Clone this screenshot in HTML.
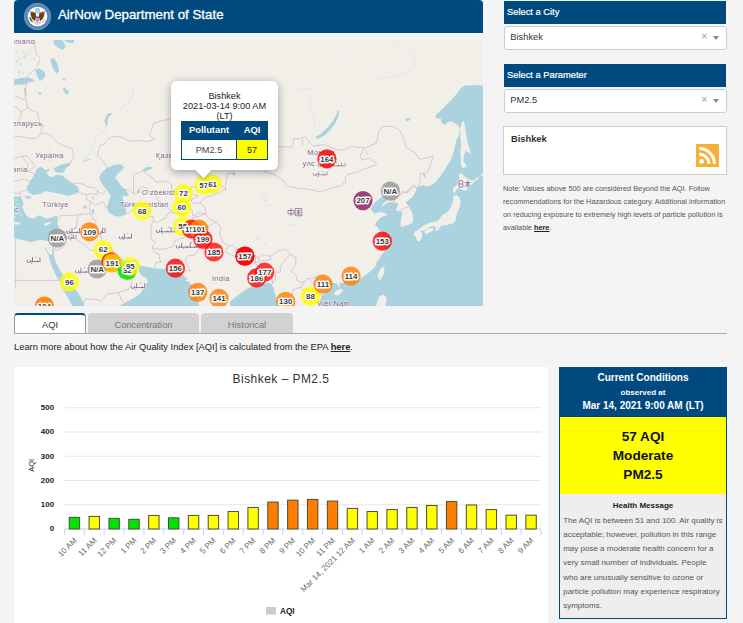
<!DOCTYPE html>
<html>
<head>
<meta charset="utf-8">
<title>AirNow Department of State</title>
<style>
html,body{margin:0;padding:0;}
body{width:743px;height:623px;overflow:hidden;background:#f4f4f4;font-family:"Liberation Sans",sans-serif;position:relative;color:#222;}
.abs{position:absolute;}
#hdr{left:14px;top:0;width:469px;height:33px;background:#004a80;border-radius:4px 4px 0 0;}
#hdr .t{position:absolute;left:44px;top:7px;font-size:13.3px;color:#fff;white-space:nowrap;-webkit-text-stroke:0.3px #fff;}
#map{left:14px;top:40px;width:469px;height:266px;background:#f2efe9;overflow:hidden;}
.sh{left:504px;width:222px;height:23px;background:#004a80;color:#fff;font-size:9.33px;-webkit-text-stroke:0.2px #fff;}
.sh span{position:absolute;left:3px;top:6px;white-space:nowrap;}
.sb{left:504px;width:221px;height:22px;background:#fff;border:1px solid #ccc;border-radius:3px;font-size:9.3px;color:#333;}
.sb span{position:absolute;left:5.3px;top:5.3px;}
.sb i{position:absolute;left:196.3px;top:3.2px;font-style:normal;font-size:10.5px;color:#999;}
.sb b{position:absolute;left:208px;top:9px;width:0;height:0;border-left:3px solid transparent;border-right:3px solid transparent;border-top:4px solid #888;}
.tab{top:313px;height:20px;font-size:9.33px;text-align:center;line-height:24.6px;color:#777;background:#d2d2d2;border-radius:4px 4px 0 0;}
.note{left:503px;top:182.2px;width:230px;font-size:7.33px;line-height:13px;color:#555;white-space:nowrap;}
#cc{left:559px;top:367px;width:166px;height:250px;border:1px solid #004a80;background:#eee;}
#cc .h{position:absolute;left:0;top:0;width:166px;height:49px;background:#004a80;color:#fff;text-align:center;font-weight:bold;}
#cc .h div{position:absolute;left:0;width:166px;white-space:nowrap;}
#cc .y{position:absolute;left:0;top:49px;width:166px;height:77px;background:#ffff00;color:#111;text-align:center;font-weight:bold;font-size:13.6px;line-height:19px;}
#cc .m{position:absolute;left:3.2px;top:146.2px;width:170px;font-size:8px;line-height:14.1px;color:#555;white-space:nowrap;}
</style>
</head>
<body>
<div id="hdr" class="abs"><div class="t">AirNow Department of State</div>
<svg class="abs" style="left:9px;top:2px" width="29" height="29" viewBox="-14.5 -14.5 29 29">
<circle r="13.3" fill="#4f82c9" stroke="#9aa35e" stroke-width="0.7"/>
<circle r="12" fill="none" stroke="#7fa6dd" stroke-width="1.6" stroke-dasharray="0.8 0.9" opacity="0.55"/>
<circle r="9.8" fill="#fff"/>
<circle cx="0" cy="-6" r="2.7" fill="#a9cfe6"/>
<path d="M-1.2 -3.4 L-7.2 -5.2 Q-7 2.5 -2.6 4.6 L-1.6 1.2 Z" fill="#6b4218"/>
<path d="M1.2 -3.4 L7.2 -5.2 Q7 2.5 2.6 4.6 L1.6 1.2 Z" fill="#6b4218"/>
<path d="M-5 -5.8 L-5.8 -3.6 M5 -5.8 L5.8 -3.6" stroke="#c9b650" stroke-width="1.1"/>
<path d="M-2 -3.2 L2 -3.2 L1.4 -0.5 L-1.4 -0.5Z" fill="#f1ede4"/>
<rect x="-2" y="0" width="4" height="1.7" fill="#2f5fae"/>
<path d="M-2 1.7 H2 V3.6 Q2 5.4 0 6 Q-2 5.4 -2 3.6Z" fill="#f08a8a"/>
<path d="M-8.4 1 Q-7.8 5 -4.2 6.2 Q-5.4 3.4 -7.2 0.6Z" fill="#3e7a3a"/>
<path d="M4 5.6 L8 2.2 M4.6 6.2 L8.4 3.6" stroke="#b5b5b5" stroke-width="0.7"/>
<path d="M-3.5 6.2 Q0 7.2 3.5 6.2" stroke="#8a8a8a" stroke-width="0.8" fill="none"/>
<ellipse cx="0" cy="7.6" rx="2.6" ry="1" fill="#d9d9d9"/>
</svg>

</div>
<div class="abs" style="left:14px;top:33px;width:469px;height:1px;background:#fbfbfb;"></div>
<div id="map" class="abs">
<svg class="abs" style="left:0;top:0" width="469" height="266" viewBox="14 40 469 266" font-family="Liberation Sans, sans-serif">
<g stroke-linejoin="round">
<path d="M53.6 40.0 L62.5 40.0 L65.7 46.5 L62.5 50.0 L57.6 47.3 L53.6 44.0Z" fill="#aad3df" />
<path d="M64.0 40.0 L74.6 40.0 L73.0 43.2 L67.3 42.4Z" fill="#aad3df" />
<path d="M50.3 58.6 L54.4 58.6 L57.6 64.2 L59.2 71.5 L56.3 73.9 L52.8 68.3 L51.2 62.6Z" fill="#aad3df" />
<path d="M35.0 69.9 L39.8 68.3 L44.7 72.3 L45.5 76.3 L42.3 79.6 L39.8 81.2 L37.4 76.3Z" fill="#aad3df" />
<path d="M14.0 79.6 L20.5 78.0 L28.5 77.2 L33.4 79.6 L35.0 81.2 L29.3 82.3 L23.7 84.4 L14.0 84.9Z" fill="#aad3df" />
<path d="M23.7 88.5 L25.6 88.1 L26.6 95.7 L25.0 95.7Z" fill="#aad3df" />
<path d="M62.5 88.5 L64.9 87.7 L68.9 91.7 L68.1 94.6 L65.4 94.1Z" fill="#aad3df" />
<path d="M62.5 78.8 L65.4 78.5 L65.6 80.6 L63.0 80.8Z" fill="#aad3df" />
<path d="M38.2 92.5 L41.2 92.3 L41.3 94.6 L38.5 94.6Z" fill="#aad3df" />
<path d="M104.5 120.8 L106.9 115.1 L109.3 113.0 L113.4 113.5 L109.3 115.9 L107.4 120.0 L107.7 124.0 L106.1 126.4Z" fill="#aad3df" />
<path d="M26.6 187.7 L30.2 181.2 L34.2 174.7 L36.6 169.1 L40.7 166.7 L45.5 169.9 L48.7 169.1 L50.3 169.9 L46.3 172.3 L48.7 176.3 L52.0 177.2 L56.8 174.7 L62.5 175.5 L68.1 180.4 L73.0 183.6 L77.8 186.8 L79.4 190.9 L75.4 194.1 L68.9 195.7 L60.8 194.1 L52.8 192.5 L46.3 190.9 L39.8 194.1 L33.4 194.9 L28.5 192.5Z" fill="#aad3df" />
<path d="M53.6 168.3 L60.0 165.0 L69.7 162.6 L68.9 165.8 L65.7 168.3 L64.1 172.3 L58.4 173.1 L55.2 171.5Z" fill="#aad3df" />
<path d="M99.1 177.2 L102.0 172.3 L107.7 167.5 L114.2 165.0 L121.4 164.2 L124.2 167.5 L121.4 170.7 L117.4 173.9 L115.0 178.0 L117.4 180.4 L120.6 185.2 L125.5 190.1 L128.7 194.1 L127.1 196.5 L122.2 195.7 L123.9 201.4 L125.5 207.9 L126.3 214.3 L120.6 216.7 L114.2 215.9 L109.3 212.7 L106.9 207.9 L108.5 201.4 L110.9 196.5 L106.9 190.1 L102.9 185.2 L100.4 181.2Z" fill="#aad3df" />
<path d="M14.0 196.5 L20.7 196.7 L23.6 202.4 L22.4 206.9 L24.1 211.3 L26.4 215.8 L29.7 218.1 L34.2 218.7 L36.5 216.4 L39.8 215.3 L44.3 218.1 L47.7 218.7 L52.2 217.0 L57.3 215.8 L57.8 219.2 L57.3 223.7 L58.4 227.1 L57.0 232.0 L54.5 236.5 L51.0 240.5 L47.7 241.1 L44.3 240.6 L39.8 240.0 L35.3 241.1 L30.9 242.2 L25.2 240.6 L19.6 239.4 L14.0 237.8Z" fill="#aad3df" />
<path d="M24.5 196.6 L27.0 196.0 L31.0 196.8 L30.5 198.5 L26.0 198.6Z" fill="#aad3df" />
<path d="M82.7 205.9 L85.9 205.1 L87.0 207.5 L84.3 209.1Z" fill="#aad3df" />
<path d="M91.9 209.5 L93.5 209.1 L94.3 213.5 L92.5 213.8Z" fill="#aad3df" />
<path d="M92.5 196.5 L93.8 196.9 L94.3 200.6 L93.0 200.1Z" fill="#aad3df" />
<path d="M43.9 247.2 L45.5 247.4 L49.2 254.0 L52.3 255.0 L52.4 248.8 L53.8 249.0 L53.9 255.5 L56.0 262.5 L60.0 270.6 L62.5 273.9 L69.0 282.0 L76.2 290.0 L80.2 296.5 L83.5 302.9 L84.3 306.0 L72.2 306.0 L70.5 302.9 L67.3 296.5 L64.1 291.6 L60.9 283.5 L56.8 277.1 L53.6 270.6 L50.3 262.5 L48.7 255.3 L47.0 252.0Z" fill="#aad3df" />
<path d="M106.5 245.3 L111.1 246.6 L113.7 251.4 L116.4 255.7 L120.6 257.9 L124.8 260.9 L128.9 261.7 L133.5 259.2 L135.8 259.6 L137.7 261.3 L139.1 265.8 L145.5 266.6 L153.6 268.2 L163.3 269.0 L174.6 270.6 L181.0 271.5 L182.0 274.5 L185.1 277.1 L187.5 279.5 L185.0 280.5 L189.2 281.9 L191.6 285.2 L194.0 286.0 L194.6 283.5 L196.0 284.0 L196.2 290.0 L197.0 297.0 L198.6 303.0 L199.5 306.0 L118.9 306.0 L126.2 302.1 L134.2 298.1 L140.7 293.2 L144.7 286.8 L148.0 281.1 L146.3 277.9 L141.5 275.5 L138.3 270.6 L135.0 262.4 L133.5 263.8 L130.8 266.8 L127.8 270.6 L124.4 271.8 L120.6 271.4 L117.5 271.8 L115.6 270.1 L116.8 266.8 L116.4 263.8 L114.5 263.8 L113.7 266.4 L111.8 265.1 L111.1 261.3 L109.2 258.7 L105.8 255.3 L103.9 251.4 L102.7 249.2 L103.1 247.1Z" fill="#aad3df" />
<path d="M230.0 306.0 L230.0 301.3 L236.5 296.5 L242.9 291.6 L249.4 287.6 L257.5 285.2 L262.0 284.5 L267.2 282.7 L271.2 283.5 L273.6 288.4 L276.0 296.5 L277.7 306.0Z" fill="#aad3df" />
<path d="M483.0 85.8 L475.6 85.1 L464.0 85.8 L460.4 88.7 L456.1 94.5 L449.6 101.7 L442.3 108.9 L435.1 116.1 L436.6 118.3 L440.9 118.7 L441.6 123.4 L445.2 124.8 L448.1 121.9 L451.7 121.2 L455.4 123.4 L459.0 126.3 L459.7 129.9 L459.0 134.9 L456.1 140.7 L454.6 148.0 L453.2 153.7 L450.3 161.0 L447.4 165.0 L444.8 170.1 L440.9 175.3 L435.8 181.7 L430.7 185.5 L426.8 186.2 L423.0 184.9 L420.4 186.2 L418.2 186.6 L416.5 189.0 L414.9 193.1 L412.5 197.1 L408.5 200.3 L406.0 202.4 L407.3 204.8 L409.3 207.6 L411.7 211.7 L412.9 215.7 L413.3 219.7 L412.1 223.0 L408.5 225.0 L403.6 226.6 L401.2 227.0 L400.4 224.6 L400.8 221.3 L401.2 217.3 L402.4 214.9 L402.0 212.1 L400.4 211.3 L398.0 211.3 L395.9 210.0 L396.3 208.4 L398.0 205.2 L397.6 203.2 L394.7 202.4 L390.7 202.0 L386.7 203.2 L384.2 205.2 L381.4 206.4 L381.8 205.2 L384.2 202.4 L387.0 200.5 L385.0 197.0 L381.4 197.1 L379.4 199.1 L376.2 201.2 L372.9 205.2 L370.5 209.2 L373.3 211.7 L374.1 213.7 L377.4 212.9 L380.2 211.7 L384.2 212.9 L386.7 214.1 L387.1 215.3 L384.2 216.1 L381.0 217.3 L378.2 219.7 L375.8 223.0 L375.0 225.0 L377.9 227.4 L379.9 230.7 L381.1 232.3 L383.5 236.0 L386.0 240.5 L383.5 243.0 L386.0 246.5 L384.7 250.8 L383.1 253.3 L381.1 255.7 L379.1 258.9 L376.7 262.2 L375.8 265.4 L374.2 267.8 L371.8 270.2 L368.6 272.7 L365.8 275.0 L363.3 276.4 L360.7 277.7 L351.7 280.9 L342.6 282.8 L338.8 283.5 L340.1 285.4 L339.4 287.4 L338.1 286.1 L337.5 284.1 L333.6 282.8 L330.0 282.5 L327.0 286.0 L325.8 293.2 L322.0 295.8 L320.7 298.4 L319.4 302.2 L320.7 306.0 L483.0 306.0Z" fill="#aad3df" />
<path d="M315.4 136.9 L321.9 132.9 L328.3 126.4 L333.2 120.8 L336.4 114.3 L337.7 110.8 L339.3 111.1 L338.0 117.5 L334.8 124.0 L329.9 130.5 L323.5 136.1 L317.8 138.9Z" fill="#aad3df" />
<path d="M296.8 213.8 L299.5 213.2 L303.3 215.5 L302.0 217.0 L298.0 216.0Z" fill="#aad3df" />
<path d="M142.0 170.5 L146.0 167.5 L150.0 166.7 L153.4 167.5 L150.0 169.5 L145.0 171.5Z" fill="#aad3df" />
<path d="M137.0 190.5 L139.5 190.0 L139.8 193.0 L137.5 193.0Z" fill="#aad3df" />
<path d="M232.5 173.0 L235.5 173.5 L235.0 175.5 L232.5 175.0Z" fill="#aad3df" />
<path d="M405.5 118.4 L411.0 118.0 L409.0 120.8 L406.0 121.0Z" fill="#aad3df" />
<path d="M423.0 174.2 L425.5 174.0 L425.3 177.2 L423.6 176.8Z" fill="#aad3df" />
<path d="M461.9 121.9 L463.7 120.5 L464.8 124.8 L466.2 133.5 L467.6 142.2 L469.8 149.4 L471.3 155.2 L468.4 152.3 L465.5 150.8 L464.0 155.2 L463.3 161.0 L466.2 165.3 L466.9 168.9 L464.8 166.7 L462.6 168.2 L461.1 165.3 L460.9 158.1 L460.4 152.3 L461.1 145.0 L460.4 137.8 L460.1 129.2Z" fill="#f2efe9" />
<path d="M452.5 188.7 L454.4 186.8 L456.3 185.5 L458.9 183.0 L459.6 179.1 L458.9 175.3 L460.2 172.7 L462.8 174.6 L466.0 177.8 L469.2 179.8 L473.0 180.4 L476.9 177.8 L480.0 176.0 L477.0 180.0 L475.0 181.0 L473.0 183.0 L470.5 185.5 L467.9 188.7 L465.3 190.7 L461.5 189.4 L458.3 188.1 L456.3 190.0 L455.1 192.6 L453.8 193.2 L453.1 190.7Z" fill="#f2efe9" />
<path d="M453.8 195.8 L457.0 195.2 L459.6 197.7 L460.8 202.2 L459.6 207.4 L457.6 211.2 L456.3 216.3 L455.7 220.8 L453.1 223.4 L449.9 224.1 L446.7 225.3 L443.5 225.3 L440.3 226.6 L439.0 229.2 L437.1 231.1 L435.2 230.5 L435.8 227.9 L434.5 226.0 L430.7 226.6 L426.8 229.2 L424.3 230.5 L420.4 231.1 L418.5 231.8 L417.2 230.5 L420.4 227.9 L424.3 225.3 L428.1 223.4 L432.6 222.1 L437.1 221.5 L439.0 219.6 L442.2 215.1 L446.1 213.1 L449.3 209.9 L451.9 204.8 L453.1 199.7Z" fill="#f2efe9" />
<path d="M424.3 231.8 L427.5 229.4 L431.3 228.1 L433.9 228.5 L432.6 231.1 L429.4 232.4 L425.5 234.3Z" fill="#f2efe9" />
<path d="M414.0 233.0 L415.9 231.1 L419.1 231.1 L421.7 233.0 L422.3 236.2 L421.0 239.5 L419.1 241.4 L417.2 240.7 L415.9 237.5 L414.0 235.0Z" fill="#f2efe9" />
<path d="M377.5 275.1 L379.5 270.6 L382.0 267.4 L383.9 267.0 L384.5 269.0 L384.0 273.2 L382.0 277.7 L380.1 280.3 L378.6 278.3Z" fill="#f2efe9" />
<path d="M333.9 293.2 L336.2 290.6 L340.1 289.0 L342.9 289.6 L342.0 292.5 L338.8 295.1 L335.5 295.5Z" fill="#f2efe9" />
<path d="M376.2 306.0 L377.5 300.9 L379.5 296.4 L382.7 294.5 L385.9 296.4 L386.6 300.9 L385.3 306.0Z" fill="#f2efe9" />
<path d="M43.8 223.7 L47.7 222.6 L51.1 221.5 L50.0 223.7 L46.6 225.4 L44.3 225.4Z" fill="#f2efe9" />
<path d="M14.0 222.4 L17.0 222.0 L20.2 223.0 L19.5 224.4 L14.0 224.6Z" fill="#f2efe9" />
<path d="M15.2 199.5 L16.7 199.3 L16.9 200.5 L15.5 200.7Z" fill="#f2efe9" />
<path d="M17.0 204.0 L18.5 203.8 L18.7 205.0 L17.3 205.2Z" fill="#f2efe9" />
<path d="M14.4 207.0 L15.9 206.8 L16.1 208.0 L14.7 208.2Z" fill="#f2efe9" />
<path d="M17.4 210.0 L18.9 209.8 L19.1 211.0 L17.7 211.2Z" fill="#f2efe9" />
<path d="M15.5 213.0 L17.0 212.8 L17.2 214.0 L15.8 214.2Z" fill="#f2efe9" />
<path d="M20.2 214.3 L21.7 214.1 L21.9 215.3 L20.5 215.5Z" fill="#f2efe9" />
<path d="M14.2 216.5 L15.7 216.3 L15.9 217.5 L14.5 217.7Z" fill="#f2efe9" />
<path d="M480.5 175.0 L483.0 173.5 L483.0 175.0 L481.0 176.5Z" fill="#f2efe9" />
<ellipse cx="19.5" cy="50.7" rx="0.6" ry="0.9" fill="#aad3df" opacity="0.37" transform="rotate(-10 19.5 50.7)"/>
<ellipse cx="29.5" cy="53.8" rx="0.7" ry="1.0" fill="#aad3df" opacity="0.41" transform="rotate(-25 29.5 53.8)"/>
<ellipse cx="19.1" cy="72.1" rx="0.9" ry="1.7" fill="#aad3df" opacity="0.63" transform="rotate(-20 19.1 72.1)"/>
<ellipse cx="20.9" cy="64.3" rx="0.8" ry="1.7" fill="#aad3df" opacity="0.66" transform="rotate(-26 20.9 64.3)"/>
<ellipse cx="26.5" cy="65.5" rx="0.7" ry="0.9" fill="#aad3df" opacity="0.52" transform="rotate(-26 26.5 65.5)"/>
<ellipse cx="25.4" cy="55.8" rx="0.9" ry="1.4" fill="#aad3df" opacity="0.66" transform="rotate(12 25.4 55.8)"/>
<ellipse cx="24.7" cy="58.8" rx="0.8" ry="1.2" fill="#aad3df" opacity="0.41" transform="rotate(-15 24.7 58.8)"/>
<ellipse cx="30.4" cy="49.1" rx="0.4" ry="1.5" fill="#aad3df" opacity="0.45" transform="rotate(-3 30.4 49.1)"/>
<ellipse cx="24.0" cy="56.9" rx="1.0" ry="0.9" fill="#aad3df" opacity="0.49" transform="rotate(-20 24.0 56.9)"/>
<ellipse cx="27.0" cy="55.2" rx="0.6" ry="1.6" fill="#aad3df" opacity="0.46" transform="rotate(-2 27.0 55.2)"/>
<ellipse cx="32.2" cy="50.6" rx="0.4" ry="1.0" fill="#aad3df" opacity="0.62" transform="rotate(1 32.2 50.6)"/>
<ellipse cx="19.5" cy="56.6" rx="0.5" ry="1.3" fill="#aad3df" opacity="0.36" transform="rotate(5 19.5 56.6)"/>
<ellipse cx="29.0" cy="73.0" rx="0.4" ry="1.0" fill="#aad3df" opacity="0.69" transform="rotate(9 29.0 73.0)"/>
<ellipse cx="22.8" cy="72.5" rx="0.8" ry="1.7" fill="#aad3df" opacity="0.45" transform="rotate(-20 22.8 72.5)"/>
<ellipse cx="23.4" cy="51.5" rx="0.6" ry="1.9" fill="#aad3df" opacity="0.47" transform="rotate(-30 23.4 51.5)"/>
<ellipse cx="15.9" cy="52.4" rx="0.9" ry="1.1" fill="#aad3df" opacity="0.45" transform="rotate(-25 15.9 52.4)"/>
<ellipse cx="33.7" cy="59.0" rx="0.5" ry="0.8" fill="#aad3df" opacity="0.37" transform="rotate(-22 33.7 59.0)"/>
<ellipse cx="27.9" cy="51.9" rx="0.4" ry="1.3" fill="#aad3df" opacity="0.44" transform="rotate(20 27.9 51.9)"/>
<ellipse cx="17.3" cy="61.8" rx="0.9" ry="1.2" fill="#aad3df" opacity="0.70" transform="rotate(-6 17.3 61.8)"/>
<ellipse cx="19.6" cy="58.7" rx="0.4" ry="1.2" fill="#aad3df" opacity="0.44" transform="rotate(14 19.6 58.7)"/>
<ellipse cx="30.8" cy="61.0" rx="0.4" ry="1.0" fill="#aad3df" opacity="0.43" transform="rotate(-20 30.8 61.0)"/>
<ellipse cx="19.4" cy="70.6" rx="0.5" ry="0.8" fill="#aad3df" opacity="0.67" transform="rotate(-2 19.4 70.6)"/>
<ellipse cx="33.8" cy="58.5" rx="0.9" ry="1.5" fill="#aad3df" opacity="0.63" transform="rotate(7 33.8 58.5)"/>
<path d="M119.8 109.8 L125.5 104.6 L131.9 97.4 L133.5 90.1" fill="none" stroke="#aad3df" stroke-width="0.9" opacity="0.45" stroke-linecap="round" stroke-linejoin="round"/>
<path d="M106.5 126.0 L104.8 130.8 L96.2 137.3 L93.0 148.1 L89.0 156.0 L84.4 159.9" fill="none" stroke="#aad3df" stroke-width="0.8" opacity="0.4" stroke-linecap="round" stroke-linejoin="round"/>
<path d="M84.0 161.0 L90.0 159.5" fill="none" stroke="#aad3df" stroke-width="1.6" opacity="0.6" stroke-linecap="round" stroke-linejoin="round"/>
<path d="M395.0 40.0 L408.0 52.0 L413.5 53.7 L415.2 62.6 L411.1 69.9 L393.4 76.3 L374.0 79.6" fill="none" stroke="#aad3df" stroke-width="0.7" opacity="0.35" stroke-linecap="round" stroke-linejoin="round"/>
<path d="M47.0 148.0 L50.0 152.0 L52.5 157.0 L50.0 161.0" fill="none" stroke="#aad3df" stroke-width="0.9" opacity="0.45" stroke-linecap="round" stroke-linejoin="round"/>
<path d="M297.6 90.0 L305.0 88.0 L311.0 89.0" fill="none" stroke="#aad3df" stroke-width="0.7" opacity="0.35" stroke-linecap="round" stroke-linejoin="round"/>
<path d="M307.0 101.0 L312.0 100.0 L309.0 109.0 L314.0 118.0 L315.0 126.0" fill="none" stroke="#aad3df" stroke-width="0.8" opacity="0.35" stroke-linecap="round" stroke-linejoin="round"/>
<path d="M302.0 140.0 L303.0 145.0" fill="none" stroke="#aad3df" stroke-width="1.3" opacity="0.6" stroke-linecap="round" stroke-linejoin="round"/>
<path d="M366.0 151.5 L367.6 154.3" fill="none" stroke="#aad3df" stroke-width="1.5" opacity="0.6" stroke-linecap="round" stroke-linejoin="round"/>
<path d="M261.0 196.5 L266.5 198.0" fill="none" stroke="#aad3df" stroke-width="1.2" opacity="0.45" stroke-linecap="round" stroke-linejoin="round"/>
<path d="M262.5 200.0 L267.0 201.0" fill="none" stroke="#aad3df" stroke-width="1.0" opacity="0.4" stroke-linecap="round" stroke-linejoin="round"/>
<path d="M341.0 52.0 L345.0 56.0 L343.0 60.0" fill="none" stroke="#aad3df" stroke-width="0.8" opacity="0.35" stroke-linecap="round" stroke-linejoin="round"/>
<ellipse cx="259" cy="212.5" rx="1.2" ry="0.6" fill="#aad3df" opacity="0.7"/>
<ellipse cx="260" cy="222" rx="0.7" ry="0.5" fill="#aad3df" opacity="0.7"/>
<ellipse cx="264" cy="231" rx="1.0" ry="0.6" fill="#aad3df" opacity="0.7"/>
<ellipse cx="259" cy="239" rx="1.2" ry="0.7" fill="#aad3df" opacity="0.7"/>
<ellipse cx="264.7" cy="244" rx="1.1" ry="0.6" fill="#aad3df" opacity="0.7"/>
<ellipse cx="290.6" cy="224.6" rx="1.2" ry="0.7" fill="#aad3df" opacity="0.7"/>
<ellipse cx="256" cy="238" rx="0.8" ry="0.5" fill="#aad3df" opacity="0.7"/>
<ellipse cx="268" cy="205" rx="0.8" ry="0.5" fill="#aad3df" opacity="0.7"/>
</g>
<path d="M35.0 40.0 L34.7 44.8 L35.8 52.9 L40.3 58.6 L36.6 67.5 L27.7 76.3 L26.1 86.8 L25.3 95.7 L26.1 99.8 L27.7 107.9 L31.8 110.3 L37.4 112.7 L39.0 119.2 L39.8 124.0 L43.9 125.6 L40.7 130.5 L41.5 133.7 L46.6 133.0 L53.1 137.3 L56.3 141.6 L63.9 145.9 L72.5 149.1 L73.6 156.7 L70.3 163.1 L68.2 166.4" fill="none" stroke="#c9b3cf" stroke-width="0.75" stroke-linejoin="round" stroke-linecap="round" opacity="0.9"/>
<path d="M14.0 95.7 L18.8 97.4 L22.1 99.0 L25.3 99.8" fill="none" stroke="#c9b3cf" stroke-width="0.75" stroke-linejoin="round" stroke-linecap="round" opacity="0.9"/>
<path d="M14.0 106.2 L18.0 108.7 L21.3 111.9 L22.1 111.1 L27.7 107.9" fill="none" stroke="#c9b3cf" stroke-width="0.75" stroke-linejoin="round" stroke-linecap="round" opacity="0.9"/>
<path d="M21.3 111.9 L20.5 117.5 L17.2 122.4 L14.0 124.0" fill="none" stroke="#c9b3cf" stroke-width="0.75" stroke-linejoin="round" stroke-linecap="round" opacity="0.9"/>
<path d="M14.0 136.1 L22.1 136.9 L30.2 138.5 L36.6 137.7 L41.5 133.7" fill="none" stroke="#c9b3cf" stroke-width="0.75" stroke-linejoin="round" stroke-linecap="round" opacity="0.9"/>
<path d="M107.0 170.0 L105.9 165.3 L102.7 161.0 L97.3 155.6 L99.4 145.9 L104.8 143.8 L107.0 139.4 L113.4 136.2 L122.1 137.3 L130.7 141.6 L139.3 140.5 L147.9 141.6 L154.4 139.4 L149.0 135.1 L152.2 128.7 L153.3 123.3 L160.9 121.1 L170.1 119.0" fill="none" stroke="#c9b3cf" stroke-width="0.75" stroke-linejoin="round" stroke-linecap="round" opacity="0.9"/>
<path d="M264.5 171.5 L275.0 174.7 L283.1 180.4 L286.3 186.0 L299.2 188.5 L308.1 189.1 L320.2 191.8 L331.0 188.5 L340.4 185.8 L345.8 181.7 L345.1 177.0 L348.5 174.3 L356.5 172.3 L364.6 168.9 L375.4 164.9 L376.7 163.6 L370.0 158.2 L361.9 159.5 L359.9 156.8 L363.3 148.7 L364.6 148.1 L359.2 147.4 L351.1 146.1 L344.4 149.4 L336.3 150.1 L328.9 146.1 L324.2 144.7 L313.5 146.1 L309.4 142.7 L308.1 140.0 L305.0 137.0 L300.0 138.5 L293.0 139.0 L293.6 143.2 L291.2 147.3 L279.0 146.5 L272.0 150.0 L264.0 152.0 L258.0 150.0" fill="none" stroke="#c9b3cf" stroke-width="0.75" stroke-linejoin="round" stroke-linecap="round" opacity="0.9"/>
<path d="M264.5 171.5 L262.0 168.0 L263.0 160.0 L258.0 150.0" fill="none" stroke="#c9b3cf" stroke-width="0.75" stroke-linejoin="round" stroke-linecap="round" opacity="0.9"/>
<path d="M364.6 148.1 L370.0 146.0 L376.0 143.0 L377.2 140.0 L378.8 130.5 L383.7 126.4 L393.4 126.4 L399.8 130.5 L403.9 140.0 L406.3 147.3 L416.0 153.7 L419.2 159.4 L433.8 156.2 L430.5 164.2 L427.3 172.3 L420.0 173.9 L420.0 183.6 L416.8 187.7" fill="none" stroke="#c9b3cf" stroke-width="0.75" stroke-linejoin="round" stroke-linecap="round" opacity="0.9"/>
<path d="M416.8 187.7 L413.6 186.8 L408.7 191.7 L402.3 192.5 L399.8 195.7 L396.0 199.0 L393.5 202.0" fill="none" stroke="#c9b3cf" stroke-width="0.75" stroke-linejoin="round" stroke-linecap="round" opacity="0.9"/>
<path d="M400.6 210.9 L403.3 208.4 L408.2 207.0" fill="none" stroke="#c9b3cf" stroke-width="0.75" stroke-linejoin="round" stroke-linecap="round" opacity="0.9"/>
<path d="M15.6 239.0 L15.6 288.0" fill="none" stroke="#c9b3cf" stroke-width="0.75" stroke-linejoin="round" stroke-linecap="round" opacity="0.9"/>
<path d="M14.0 280.4 L60.5 280.4" fill="none" stroke="#c9b3cf" stroke-width="0.75" stroke-linejoin="round" stroke-linecap="round" opacity="0.9"/>
<path d="M53.3 248.8 L50.9 240.9" fill="none" stroke="#c9b3cf" stroke-width="0.75" stroke-linejoin="round" stroke-linecap="round" opacity="0.9"/>
<path d="M90.9 201.6 L89.4 208.0 L90.9 213.7 L93.2 219.4 L96.3 220.8 L93.6 228.7 L96.3 232.3 L100.8 236.0 L102.0 242.2 L103.1 244.4 L105.4 247.1" fill="none" stroke="#c9b3cf" stroke-width="0.75" stroke-linejoin="round" stroke-linecap="round" opacity="0.9"/>
<path d="M90.9 213.7 L81.8 214.2 L72.7 215.6 L65.1 215.6 L60.2 215.6 L59.8 218.5 L57.1 219.9" fill="none" stroke="#c9b3cf" stroke-width="0.75" stroke-linejoin="round" stroke-linecap="round" opacity="0.9"/>
<path d="M81.8 214.2 L77.3 217.1 L76.5 226.9 L68.1 231.4 L69.7 236.9 L74.2 238.2 L80.7 241.8 L90.6 250.1 L97.4 250.5 L100.8 251.0 L102.0 253.1 L104.6 253.1" fill="none" stroke="#c9b3cf" stroke-width="0.75" stroke-linejoin="round" stroke-linecap="round" opacity="0.9"/>
<path d="M68.1 231.4 L60.5 236.4 L57.1 234.6 L56.0 231.9 L59.8 227.8 L57.5 225.9" fill="none" stroke="#c9b3cf" stroke-width="0.75" stroke-linejoin="round" stroke-linecap="round" opacity="0.9"/>
<path d="M69.7 236.9 L61.3 240.0 L65.1 244.4 L63.2 246.6 L57.9 250.1 L53.7 249.2" fill="none" stroke="#c9b3cf" stroke-width="0.75" stroke-linejoin="round" stroke-linecap="round" opacity="0.9"/>
<path d="M83.3 303.0 L84.9 299.0 L88.7 299.0 L97.0 299.8 L101.2 300.6 L106.9 294.3 L118.3 292.6 L129.7 288.6 L132.4 280.5 L130.5 277.6 L120.6 276.8 L116.8 271.8" fill="none" stroke="#c9b3cf" stroke-width="0.75" stroke-linejoin="round" stroke-linecap="round" opacity="0.9"/>
<path d="M130.5 277.6 L133.5 272.2 L135.0 268.5" fill="none" stroke="#c9b3cf" stroke-width="0.75" stroke-linejoin="round" stroke-linecap="round" opacity="0.9"/>
<path d="M118.3 292.6 L122.5 302.0" fill="none" stroke="#c9b3cf" stroke-width="0.75" stroke-linejoin="round" stroke-linecap="round" opacity="0.9"/>
<path d="M125.5 213.3 L128.9 212.8 L134.3 209.4 L138.1 208.9 L142.6 211.8 L146.0 212.3 L149.8 216.6 L153.3 216.6 L153.3 221.3 L150.6 226.4 L152.1 231.0 L150.6 233.7 L151.7 240.0 L155.5 242.2 L152.1 247.5 L155.2 252.7 L159.3 254.4 L159.3 258.7 L161.2 261.3 L155.5 263.0 L154.8 267.2" fill="none" stroke="#c9b3cf" stroke-width="0.75" stroke-linejoin="round" stroke-linecap="round" opacity="0.9"/>
<path d="M153.3 221.3 L157.4 222.7 L160.5 220.3 L165.8 218.0 L166.9 214.2 L170.4 212.3 L173.4 212.8 L178.3 213.7 L184.0 214.2 L187.5 211.8 L189.7 208.0 L192.0 210.4 L192.8 216.1 L199.2 212.8 L205.3 213.7" fill="none" stroke="#c9b3cf" stroke-width="0.75" stroke-linejoin="round" stroke-linecap="round" opacity="0.9"/>
<path d="M205.3 213.7 L201.9 215.6 L192.8 217.5 L191.3 225.5 L186.7 228.7 L186.3 232.8 L184.0 238.2 L179.9 238.6 L174.9 240.9 L173.0 246.6 L163.9 249.2 L158.2 249.2 L152.1 247.5" fill="none" stroke="#c9b3cf" stroke-width="0.75" stroke-linejoin="round" stroke-linecap="round" opacity="0.9"/>
<path d="M216.3 221.8 L208.7 226.4 L201.9 225.5 L204.2 234.1 L207.2 236.4 L203.4 241.8 L204.2 242.6 L199.6 247.1 L197.7 251.0 L193.9 255.7 L189.0 255.3 L185.2 258.7 L187.5 265.1 L190.5 270.6 L182.1 271.0 L179.9 273.5" fill="none" stroke="#c9b3cf" stroke-width="0.75" stroke-linejoin="round" stroke-linecap="round" opacity="0.9"/>
<path d="M205.3 213.7 L209.5 219.4 L216.3 221.8 L220.9 227.3 L219.8 235.1 L222.8 242.2 L228.5 245.7 L232.7 245.3 L239.9 251.4 L247.5 255.3 L255.5 255.7 L258.5 258.3 L261.9 254.4 L268.8 256.2 L270.7 256.2 L277.9 251.0 L285.5 249.2 L290.4 254.4 L295.8 257.5 L295.8 264.7 L291.6 270.1 L292.0 272.2 L296.5 275.5 L296.9 280.5 L301.1 282.5 L304.9 281.3 L307.5 278.4 L309.1 278.8 L314.0 277.6 L320.8 275.1 L326.2 277.2 L325.8 280.5 L331.1 282.5" fill="none" stroke="#c9b3cf" stroke-width="0.75" stroke-linejoin="round" stroke-linecap="round" opacity="0.9"/>
<path d="M228.5 245.7 L225.1 251.8 L228.5 253.6 L235.0 256.6 L240.3 257.5 L246.7 261.3 L255.5 262.1 L255.5 255.7" fill="none" stroke="#c9b3cf" stroke-width="0.75" stroke-linejoin="round" stroke-linecap="round" opacity="0.9"/>
<path d="M258.5 258.3 L258.9 260.9 L263.8 260.4 L270.7 260.0 L270.7 256.2" fill="none" stroke="#c9b3cf" stroke-width="0.75" stroke-linejoin="round" stroke-linecap="round" opacity="0.9"/>
<path d="M255.5 262.1 L255.9 264.7 L258.5 267.2 L255.5 270.1 L258.1 275.5 L258.5 278.4 L259.3 281.3" fill="none" stroke="#c9b3cf" stroke-width="0.75" stroke-linejoin="round" stroke-linecap="round" opacity="0.9"/>
<path d="M255.5 262.1 L258.9 262.6 L261.9 263.8 L261.9 266.8 L271.8 268.0 L271.1 271.4 L267.3 273.9 L268.8 276.4 L271.4 273.9 L272.6 283.3 L271.4 285.8" fill="none" stroke="#c9b3cf" stroke-width="0.75" stroke-linejoin="round" stroke-linecap="round" opacity="0.9"/>
<path d="M290.4 254.4 L286.3 258.3 L282.1 263.8 L280.2 267.2 L280.6 272.2 L275.2 272.2 L275.6 278.4 L272.6 283.3" fill="none" stroke="#c9b3cf" stroke-width="0.75" stroke-linejoin="round" stroke-linecap="round" opacity="0.9"/>
<path d="M304.9 281.3 L301.1 287.0 L293.1 289.8 L292.0 294.7 L290.8 300.6 L295.0 303.8 L293.9 306.2" fill="none" stroke="#c9b3cf" stroke-width="0.75" stroke-linejoin="round" stroke-linecap="round" opacity="0.9"/>
<path d="M309.1 278.8 L311.7 282.1 L315.5 285.0 L319.3 288.6 L315.9 290.6 L320.5 293.9 L325.4 300.6 L329.2 304.6 L329.6 306.2" fill="none" stroke="#c9b3cf" stroke-width="0.75" stroke-linejoin="round" stroke-linecap="round" opacity="0.9"/>
<path d="M301.1 287.0 L302.6 290.6 L305.3 290.6 L305.6 297.9 L308.7 295.9 L313.6 295.1 L318.6 298.6 L318.9 303.0 L322.0 306.2" fill="none" stroke="#c9b3cf" stroke-width="0.75" stroke-linejoin="round" stroke-linecap="round" opacity="0.9"/>
<path d="M252.4 151.4 L245.6 162.8 L236.1 162.3 L233.4 171.6 L234.6 173.2 L227.7 173.8 L225.5 185.9 L225.5 189.0 L218.6 193.1 L212.9 195.1 L205.3 197.6 L201.1 201.1 L200.4 203.1 L205.3 207.5 L205.3 213.7" fill="none" stroke="#c9b3cf" stroke-width="0.75" stroke-linejoin="round" stroke-linecap="round" opacity="0.9"/>
<path d="M225.5 189.0 L221.7 185.9 L209.5 184.9 L202.7 183.8 L200.0 187.5 L190.5 187.0 L190.1 188.5 L182.9 193.6 L179.1 195.1 L173.4 194.6 L171.5 188.0 L171.9 184.9 L167.3 181.2 L156.3 182.3 L152.9 178.1 L143.4 171.1 L133.5 174.3 L133.5 193.6 L129.3 190.0 L122.1 189.5 L120.2 191.6" fill="none" stroke="#c9b3cf" stroke-width="0.75" stroke-linejoin="round" stroke-linecap="round" opacity="0.9"/>
<path d="M133.5 193.6 L137.3 193.6 L137.7 190.0 L143.0 186.4 L148.7 189.0 L149.1 193.1 L155.9 194.6 L157.8 200.1 L164.7 205.5 L173.4 212.8" fill="none" stroke="#c9b3cf" stroke-width="0.75" stroke-linejoin="round" stroke-linecap="round" opacity="0.9"/>
<path d="M178.3 213.7 L179.1 205.5 L179.5 202.6 L188.6 200.1 L190.1 199.1 L193.5 203.1 L200.4 203.1" fill="none" stroke="#c9b3cf" stroke-width="0.75" stroke-linejoin="round" stroke-linecap="round" opacity="0.9"/>
<path d="M190.1 188.5 L191.6 189.0 L189.0 192.6 L195.1 195.1 L198.5 196.1 L193.2 199.1 L190.1 199.1" fill="none" stroke="#c9b3cf" stroke-width="0.75" stroke-linejoin="round" stroke-linecap="round" opacity="0.9"/>
<path d="M72.7 182.8 L82.2 183.8 L87.9 187.0 L94.4 187.5 L97.4 191.1 L102.3 194.1 L105.4 191.1" fill="none" stroke="#c9b3cf" stroke-width="0.75" stroke-linejoin="round" stroke-linecap="round" opacity="0.9"/>
<path d="M78.4 192.6 L86.0 194.6 L91.7 193.6 L97.4 194.6 L97.4 191.1" fill="none" stroke="#c9b3cf" stroke-width="0.75" stroke-linejoin="round" stroke-linecap="round" opacity="0.9"/>
<path d="M86.0 194.6 L86.8 199.6 L90.9 201.6 L95.5 205.5 L99.3 203.6 L103.1 201.6 L106.5 208.0" fill="none" stroke="#c9b3cf" stroke-width="0.75" stroke-linejoin="round" stroke-linecap="round" opacity="0.9"/>
<path d="M13.8 158.3 L21.8 156.1 L27.1 156.1 L31.3 160.6 L34.7 166.7 L27.9 171.6 L33.6 173.2" fill="none" stroke="#c9b3cf" stroke-width="0.75" stroke-linejoin="round" stroke-linecap="round" opacity="0.9"/>
<path d="M21.8 156.1 L27.5 163.9 L27.9 171.6" fill="none" stroke="#c9b3cf" stroke-width="0.75" stroke-linejoin="round" stroke-linecap="round" opacity="0.9"/>
<path d="M13.8 181.2 L23.3 179.1 L29.4 181.2" fill="none" stroke="#c9b3cf" stroke-width="0.75" stroke-linejoin="round" stroke-linecap="round" opacity="0.9"/>
<path d="M13.8 193.1 L19.9 193.6 L21.0 191.6 L27.1 190.0" fill="none" stroke="#c9b3cf" stroke-width="0.75" stroke-linejoin="round" stroke-linecap="round" opacity="0.9"/>
<path d="M19.9 193.6 L20.6 195.6 L19.5 196.6" fill="none" stroke="#c9b3cf" stroke-width="0.75" stroke-linejoin="round" stroke-linecap="round" opacity="0.9"/>
<path d="M393.4 200.1 L399.5 195.1 L402.9 191.1 L407.1 193.1 L408.2 190.0 L413.9 184.9 L417.0 188.0" fill="none" stroke="#c9b3cf" stroke-width="0.75" stroke-linejoin="round" stroke-linecap="round" opacity="0.9"/>
<text x="35" y="44" font-size="7.4" fill="#7d5f85" stroke="#fff" stroke-width="1.4" stroke-opacity="0.6" paint-order="stroke" stroke-linejoin="round" text-anchor="end" letter-spacing="0.35">Finland</text>
<text x="42.3" y="126.4" font-size="7.4" fill="#7d5f85" stroke="#fff" stroke-width="1.4" stroke-opacity="0.6" paint-order="stroke" stroke-linejoin="round" text-anchor="end" letter-spacing="0.35">Беларусь</text>
<text x="49.5" y="158.3" font-size="7.4" fill="#7d5f85" stroke="#fff" stroke-width="1.4" stroke-opacity="0.6" paint-order="stroke" stroke-linejoin="round" text-anchor="middle" letter-spacing="0.35">Україна</text>
<text x="27.5" y="171.8" font-size="7.4" fill="#7d5f85" stroke="#fff" stroke-width="1.4" stroke-opacity="0.6" paint-order="stroke" stroke-linejoin="round" text-anchor="end" letter-spacing="0.35">România</text>
<text x="55.5" y="207.2" font-size="7.4" fill="#7d5f85" stroke="#fff" stroke-width="1.4" stroke-opacity="0.6" paint-order="stroke" stroke-linejoin="round" text-anchor="middle" letter-spacing="0.35">Türkiye</text>
<text x="19" y="212" font-size="7.4" fill="#7d5f85" stroke="#fff" stroke-width="1.4" stroke-opacity="0.6" paint-order="stroke" stroke-linejoin="round" text-anchor="end" letter-spacing="0.35">Ελλάς</text>
<text x="155.8" y="158" font-size="7.4" fill="#7d5f85" stroke="#fff" stroke-width="1.4" stroke-opacity="0.6" paint-order="stroke" stroke-linejoin="round" text-anchor="start" letter-spacing="0.35">Қазақстан</text>
<text x="141.8" y="195.3" font-size="7.4" fill="#7d5f85" stroke="#fff" stroke-width="1.4" stroke-opacity="0.6" paint-order="stroke" stroke-linejoin="round" text-anchor="start" letter-spacing="0.35">O‘zbekiston</text>
<text x="119.8" y="207" font-size="7.4" fill="#7d5f85" stroke="#fff" stroke-width="1.4" stroke-opacity="0.6" paint-order="stroke" stroke-linejoin="round" text-anchor="start" letter-spacing="0.35">Türkmenistan</text>
<text x="321" y="155.3" font-size="7.4" fill="#7d5f85" stroke="#fff" stroke-width="1.4" stroke-opacity="0.6" paint-order="stroke" stroke-linejoin="round" text-anchor="middle" letter-spacing="0.35">Монгол</text>
<text x="302.5" y="165.8" font-size="7.4" fill="#7d5f85" stroke="#fff" stroke-width="1.4" stroke-opacity="0.6" paint-order="stroke" stroke-linejoin="round" text-anchor="start" letter-spacing="0.35">улс</text>
<text x="220.8" y="280.6" font-size="7.4" fill="#7d5f85" stroke="#fff" stroke-width="1.4" stroke-opacity="0.6" paint-order="stroke" stroke-linejoin="round" text-anchor="middle" letter-spacing="0.35">India</text>
<text x="333.6" y="305.5" font-size="7.4" fill="#7d5f85" stroke="#fff" stroke-width="1.4" stroke-opacity="0.6" paint-order="stroke" stroke-linejoin="round" text-anchor="middle" letter-spacing="0.35">Việt Nam</text>
<path d="M27.2 260.0 q-0.6 2.8 1.6 2.6 q1.8 -0.1 1.7 -2.4 M30.4 261.6 H38.8 M32.5 261.6 v-4.2 M36.7 261.6 q0.8 -2.4 2 -0.2 M40.0 261.9 v-4.5" fill="none" stroke="#fff" stroke-opacity="0.7" stroke-width="2.15" stroke-linecap="round"/>
<path d="M27.2 260.0 q-0.6 2.8 1.6 2.6 q1.8 -0.1 1.7 -2.4 M30.4 261.6 H38.8 M32.5 261.6 v-4.2 M36.7 261.6 q0.8 -2.4 2 -0.2 M40.0 261.9 v-4.5" fill="none" stroke="#7d5f85" stroke-width="0.85" stroke-linecap="round" stroke-linejoin="round"/>
<circle cx="31.6" cy="263.2" r="0.5" fill="#7d5f85"/>
<circle cx="36.1" cy="257.0" r="0.5" fill="#7d5f85"/>
<path d="M119.2 236.4 q-0.6 2.8 1.6 2.6 q1.8 -0.1 1.7 -2.4 M122.4 238.0 H130.3 M124.4 238.0 v-4.2 M128.3 238.0 q0.8 -2.4 2 -0.2 M131.5 238.3 v-4.5" fill="none" stroke="#fff" stroke-opacity="0.7" stroke-width="2.15" stroke-linecap="round"/>
<path d="M119.2 236.4 q-0.6 2.8 1.6 2.6 q1.8 -0.1 1.7 -2.4 M122.4 238.0 H130.3 M124.4 238.0 v-4.2 M128.3 238.0 q0.8 -2.4 2 -0.2 M131.5 238.3 v-4.5" fill="none" stroke="#7d5f85" stroke-width="0.85" stroke-linecap="round" stroke-linejoin="round"/>
<circle cx="123.4" cy="239.6" r="0.5" fill="#7d5f85"/>
<circle cx="127.8" cy="233.4" r="0.5" fill="#7d5f85"/>
<path d="M156.2 230.2 q-0.6 2.8 1.6 2.6 q1.8 -0.1 1.7 -2.4 M159.4 231.8 H173.4 M161.7 231.8 v-4.2 M166.4 231.8 q0.8 -2.4 2 -0.2 M171.1 231.8 v-4.2 M174.6 232.1 v-4.5" fill="none" stroke="#fff" stroke-opacity="0.7" stroke-width="2.15" stroke-linecap="round"/>
<path d="M156.2 230.2 q-0.6 2.8 1.6 2.6 q1.8 -0.1 1.7 -2.4 M159.4 231.8 H173.4 M161.7 231.8 v-4.2 M166.4 231.8 q0.8 -2.4 2 -0.2 M171.1 231.8 v-4.2 M174.6 232.1 v-4.5" fill="none" stroke="#7d5f85" stroke-width="0.85" stroke-linecap="round" stroke-linejoin="round"/>
<circle cx="162.5" cy="233.4" r="0.5" fill="#7d5f85"/>
<circle cx="169.0" cy="227.2" r="0.5" fill="#7d5f85"/>
<path d="M176.2 245.6 q-0.6 2.8 1.6 2.6 q1.8 -0.1 1.7 -2.4 M179.4 247.2 H196.8 M181.6 247.2 v-4.2 M185.9 247.2 q0.8 -2.4 2 -0.2 M190.3 247.2 v-4.2 M194.6 247.2 q0.8 -2.4 2 -0.2 M198.0 247.5 v-4.5" fill="none" stroke="#fff" stroke-opacity="0.7" stroke-width="2.15" stroke-linecap="round"/>
<path d="M176.2 245.6 q-0.6 2.8 1.6 2.6 q1.8 -0.1 1.7 -2.4 M179.4 247.2 H196.8 M181.6 247.2 v-4.2 M185.9 247.2 q0.8 -2.4 2 -0.2 M190.3 247.2 v-4.2 M194.6 247.2 q0.8 -2.4 2 -0.2 M198.0 247.5 v-4.5" fill="none" stroke="#7d5f85" stroke-width="0.85" stroke-linecap="round" stroke-linejoin="round"/>
<circle cx="183.7" cy="248.8" r="0.5" fill="#7d5f85"/>
<circle cx="191.4" cy="242.6" r="0.5" fill="#7d5f85"/>
<path d="M131.2 286.0 q-0.6 2.8 1.6 2.6 q1.8 -0.1 1.7 -2.4 M134.4 287.6 H143.5 M136.7 287.6 v-4.2 M141.2 287.6 q0.8 -2.4 2 -0.2 M144.7 287.9 v-4.5" fill="none" stroke="#fff" stroke-opacity="0.7" stroke-width="2.15" stroke-linecap="round"/>
<path d="M131.2 286.0 q-0.6 2.8 1.6 2.6 q1.8 -0.1 1.7 -2.4 M134.4 287.6 H143.5 M136.7 287.6 v-4.2 M141.2 287.6 q0.8 -2.4 2 -0.2 M144.7 287.9 v-4.5" fill="none" stroke="#7d5f85" stroke-width="0.85" stroke-linecap="round" stroke-linejoin="round"/>
<circle cx="135.8" cy="289.2" r="0.5" fill="#7d5f85"/>
<circle cx="140.6" cy="283.0" r="0.5" fill="#7d5f85"/>
<path d="M66.7 231.0 q-0.6 2.8 1.6 2.6 q1.8 -0.1 1.7 -2.4 M69.9 232.6 H78.2 M72.0 232.6 v-4.2 M76.1 232.6 q0.8 -2.4 2 -0.2 M79.4 232.9 v-4.5" fill="none" stroke="#fff" stroke-opacity="0.7" stroke-width="2.15" stroke-linecap="round"/>
<path d="M66.7 231.0 q-0.6 2.8 1.6 2.6 q1.8 -0.1 1.7 -2.4 M69.9 232.6 H78.2 M72.0 232.6 v-4.2 M76.1 232.6 q0.8 -2.4 2 -0.2 M79.4 232.9 v-4.5" fill="none" stroke="#7d5f85" stroke-width="0.85" stroke-linecap="round" stroke-linejoin="round"/>
<circle cx="71.0" cy="234.2" r="0.5" fill="#7d5f85"/>
<circle cx="75.5" cy="228.0" r="0.5" fill="#7d5f85"/>
<path d="M98.2 231.0 q-0.6 2.8 1.6 2.6 q1.8 -0.1 1.7 -2.4 M101.4 232.6 H103.8 M102.6 232.6 v-4.2 M105.0 232.9 v-4.5" fill="none" stroke="#fff" stroke-opacity="0.7" stroke-width="2.15" stroke-linecap="round"/>
<path d="M98.2 231.0 q-0.6 2.8 1.6 2.6 q1.8 -0.1 1.7 -2.4 M101.4 232.6 H103.8 M102.6 232.6 v-4.2 M105.0 232.9 v-4.5" fill="none" stroke="#7d5f85" stroke-width="0.85" stroke-linecap="round" stroke-linejoin="round"/>
<circle cx="100.5" cy="234.2" r="0.5" fill="#7d5f85"/>
<circle cx="102.9" cy="228.0" r="0.5" fill="#7d5f85"/>
<path d="M68.2 236.5 q-0.6 2.8 1.6 2.6 q1.8 -0.1 1.7 -2.4 M71.4 238.1 H74.8 M73.1 238.1 v-2.7 M76.0 238.4 v-3.0" fill="none" stroke="#fff" stroke-opacity="0.7" stroke-width="2.0" stroke-linecap="round"/>
<path d="M68.2 236.5 q-0.6 2.8 1.6 2.6 q1.8 -0.1 1.7 -2.4 M71.4 238.1 H74.8 M73.1 238.1 v-2.7 M76.0 238.4 v-3.0" fill="none" stroke="#7d5f85" stroke-width="0.7" stroke-linecap="round" stroke-linejoin="round"/>
<circle cx="70.8" cy="239.7" r="0.5" fill="#7d5f85"/>
<circle cx="73.6" cy="235.0" r="0.5" fill="#7d5f85"/>
<path d="M75.6 270.6 q-0.6 2.8 1.6 2.6 q1.8 -0.1 1.7 -2.4 M78.8 272.2 H87.1 M80.9 272.2 v-4.2 M85.0 272.2 q0.8 -2.4 2 -0.2 M88.3 272.5 v-4.5" fill="none" stroke="#fff" stroke-opacity="0.7" stroke-width="2.15" stroke-linecap="round"/>
<path d="M75.6 270.6 q-0.6 2.8 1.6 2.6 q1.8 -0.1 1.7 -2.4 M78.8 272.2 H87.1 M80.9 272.2 v-4.2 M85.0 272.2 q0.8 -2.4 2 -0.2 M88.3 272.5 v-4.5" fill="none" stroke="#7d5f85" stroke-width="0.85" stroke-linecap="round" stroke-linejoin="round"/>
<circle cx="79.9" cy="273.8" r="0.5" fill="#7d5f85"/>
<circle cx="84.4" cy="267.6" r="0.5" fill="#7d5f85"/>
<path d="M313.2 173.2 q-0.6 2.8 1.6 2.6 q1.8 -0.1 1.7 -2.4 M316.4 174.8 H325.8 M318.8 174.8 v-2.8 M323.4 174.8 q0.8 -2.4 2 -0.2 M327.0 175.1 v-3.1" fill="none" stroke="#fff" stroke-opacity="0.7" stroke-width="2.0" stroke-linecap="round"/>
<path d="M313.2 173.2 q-0.6 2.8 1.6 2.6 q1.8 -0.1 1.7 -2.4 M316.4 174.8 H325.8 M318.8 174.8 v-2.8 M323.4 174.8 q0.8 -2.4 2 -0.2 M327.0 175.1 v-3.1" fill="none" stroke="#7d5f85" stroke-width="0.7" stroke-linecap="round" stroke-linejoin="round"/>
<circle cx="317.9" cy="176.4" r="0.5" fill="#7d5f85"/>
<circle cx="322.8" cy="171.5" r="0.5" fill="#7d5f85"/>
<path d="M318.2 164.2 q-0.6 2.8 1.6 2.6 q1.8 -0.1 1.7 -2.4 M321.4 165.8 H343.8 M323.6 165.8 v-2.8 M328.1 165.8 q0.8 -2.4 2 -0.2 M332.6 165.8 v-2.8 M337.1 165.8 q0.8 -2.4 2 -0.2 M341.6 165.8 v-2.8 M345.0 166.1 v-3.1" fill="none" stroke="#fff" stroke-opacity="0.7" stroke-width="2.0" stroke-linecap="round"/>
<path d="M318.2 164.2 q-0.6 2.8 1.6 2.6 q1.8 -0.1 1.7 -2.4 M321.4 165.8 H343.8 M323.6 165.8 v-2.8 M328.1 165.8 q0.8 -2.4 2 -0.2 M332.6 165.8 v-2.8 M337.1 165.8 q0.8 -2.4 2 -0.2 M341.6 165.8 v-2.8 M345.0 166.1 v-3.1" fill="none" stroke="#7d5f85" stroke-width="0.7" stroke-linecap="round" stroke-linejoin="round"/>
<circle cx="327.4" cy="167.4" r="0.5" fill="#7d5f85"/>
<circle cx="336.9" cy="162.5" r="0.5" fill="#7d5f85"/>
<path d="M288 210.5 h6 v3.4 h-6 Z M291 208 v8.2 M295.2 208.6 h6.6 v7.2 h-6.6 Z M296.6 210.6 h3.8 M296.6 212.2 h3.8 M296.4 214 h4.2 M298.5 210.6 v3.4" fill="none" stroke="#fff" stroke-opacity="0.7" stroke-width="2.2"/>
<path d="M288 210.5 h6 v3.4 h-6 Z M291 208 v8.2 M295.2 208.6 h6.6 v7.2 h-6.6 Z M296.6 210.6 h3.8 M296.6 212.2 h3.8 M296.4 214 h4.2 M298.5 210.6 v3.4" fill="none" stroke="#7d5f85" stroke-width="0.8"/>
<path d="M459 180.8 h3.8 v6.4 h-3.8 Z M459 184 h3.8 M464.6 182.6 h6.2 M467.7 180.4 v7.4 M467.7 182.8 L464.8 186.4 M467.7 182.8 L470.6 186.4 M466.3 186 h2.8" fill="none" stroke="#fff" stroke-opacity="0.7" stroke-width="2.2"/>
<path d="M459 180.8 h3.8 v6.4 h-3.8 Z M459 184 h3.8 M464.6 182.6 h6.2 M467.7 180.4 v7.4 M467.7 182.8 L464.8 186.4 M467.7 182.8 L470.6 186.4 M466.3 186 h2.8" fill="none" stroke="#7d5f85" stroke-width="0.8"/>
<circle cx="44.4" cy="306" r="9.6" fill="#ff7e00" fill-opacity="0.9"/>
<circle cx="57.3" cy="238" r="9.6" fill="#9a9a9a" fill-opacity="0.85"/>
<circle cx="89.6" cy="231.8" r="9.6" fill="#ff7e00" fill-opacity="0.8"/>
<circle cx="103.2" cy="249.6" r="9.6" fill="#ffff00" fill-opacity="0.8"/>
<circle cx="97.2" cy="269" r="9.6" fill="#9a9a9a" fill-opacity="0.85"/>
<circle cx="110.9" cy="261.8" r="9.6" fill="#ff0000" fill-opacity="0.8"/>
<circle cx="112.2" cy="263" r="9.6" fill="#ffc400" fill-opacity="0.92"/>
<circle cx="69.4" cy="281.9" r="9.6" fill="#ffff00" fill-opacity="0.8"/>
<circle cx="127.3" cy="270.5" r="9.6" fill="#00e400" fill-opacity="0.85"/>
<circle cx="130.3" cy="266.3" r="9.6" fill="#ffff00" fill-opacity="0.75"/>
<circle cx="142.1" cy="210.8" r="9.6" fill="#ffff00" fill-opacity="0.8"/>
<circle cx="183.5" cy="193.5" r="9.6" fill="#ffff00" fill-opacity="0.8"/>
<circle cx="181.8" cy="207.4" r="9.6" fill="#ffff00" fill-opacity="0.8"/>
<circle cx="203.7" cy="185.4" r="9.6" fill="#ffff00" fill-opacity="0.8"/>
<circle cx="212.6" cy="184.2" r="9.6" fill="#ffff00" fill-opacity="0.75"/>
<circle cx="182.7" cy="226.5" r="9.6" fill="#ffff00" fill-opacity="0.8"/>
<circle cx="191.6" cy="229" r="9.6" fill="#ff0000" fill-opacity="0.8"/>
<circle cx="198.9" cy="229.2" r="9.6" fill="#ff7e00" fill-opacity="0.85"/>
<circle cx="202.9" cy="239.3" r="9.6" fill="#ff0000" fill-opacity="0.8"/>
<circle cx="213.9" cy="252" r="9.6" fill="#ff0000" fill-opacity="0.75"/>
<circle cx="175.4" cy="268.2" r="9.6" fill="#ff0000" fill-opacity="0.8"/>
<circle cx="197.7" cy="292.4" r="9.6" fill="#ff7e00" fill-opacity="0.8"/>
<circle cx="219" cy="298.4" r="9.6" fill="#ff7e00" fill-opacity="0.8"/>
<circle cx="244.9" cy="256.1" r="9.6" fill="#ff0000" fill-opacity="0.8"/>
<circle cx="244.9" cy="256.1" r="9.6" fill="#ff0000" fill-opacity="0.8"/>
<circle cx="256.7" cy="277.9" r="9.6" fill="#ff0000" fill-opacity="0.78"/>
<circle cx="264.7" cy="272.2" r="9.6" fill="#ff0000" fill-opacity="0.75"/>
<circle cx="285.7" cy="301.3" r="9.6" fill="#ff7e00" fill-opacity="0.8"/>
<circle cx="310.5" cy="296.4" r="9.6" fill="#ffff00" fill-opacity="0.85"/>
<circle cx="323" cy="284.2" r="9.6" fill="#ff7e00" fill-opacity="0.8"/>
<circle cx="351" cy="276.1" r="9.6" fill="#ff7e00" fill-opacity="0.8"/>
<circle cx="382.3" cy="241.2" r="9.6" fill="#ff0000" fill-opacity="0.8"/>
<circle cx="363" cy="200.6" r="9.6" fill="#99336f" fill-opacity="0.92"/>
<circle cx="390.4" cy="191.1" r="9.6" fill="#9a9a9a" fill-opacity="0.85"/>
<circle cx="326.9" cy="158.8" r="9.6" fill="#ff0000" fill-opacity="0.82"/>
<text x="44.4" y="308.8" font-size="7.9" font-weight="bold" fill="#3a3a3a" stroke="#fff" stroke-width="2.8" stroke-linejoin="round" paint-order="stroke" text-anchor="middle">104</text>
<text x="57.3" y="240.8" font-size="7.9" font-weight="bold" fill="#3a3a3a" stroke="#fff" stroke-width="2.8" stroke-linejoin="round" paint-order="stroke" text-anchor="middle">N/A</text>
<text x="89.6" y="234.6" font-size="7.9" font-weight="bold" fill="#3a3a3a" stroke="#fff" stroke-width="2.8" stroke-linejoin="round" paint-order="stroke" text-anchor="middle">109</text>
<text x="103.2" y="252.4" font-size="7.9" font-weight="bold" fill="#3a3a3a" stroke="#fff" stroke-width="2.8" stroke-linejoin="round" paint-order="stroke" text-anchor="middle">62</text>
<text x="97.2" y="271.8" font-size="7.9" font-weight="bold" fill="#3a3a3a" stroke="#fff" stroke-width="2.8" stroke-linejoin="round" paint-order="stroke" text-anchor="middle">N/A</text>
<text x="112.2" y="265.8" font-size="7.9" font-weight="bold" fill="#3a3a3a" stroke="#fff" stroke-width="2.8" stroke-linejoin="round" paint-order="stroke" text-anchor="middle">191</text>
<text x="69.4" y="284.7" font-size="7.9" font-weight="bold" fill="#3a3a3a" stroke="#fff" stroke-width="2.8" stroke-linejoin="round" paint-order="stroke" text-anchor="middle">96</text>
<text x="127.3" y="273.3" font-size="7.9" font-weight="bold" fill="#3a3a3a" stroke="#fff" stroke-width="2.8" stroke-linejoin="round" paint-order="stroke" text-anchor="middle">32</text>
<text x="130.3" y="269.1" font-size="7.9" font-weight="bold" fill="#3a3a3a" stroke="#fff" stroke-width="2.8" stroke-linejoin="round" paint-order="stroke" text-anchor="middle">95</text>
<text x="142.1" y="213.6" font-size="7.9" font-weight="bold" fill="#3a3a3a" stroke="#fff" stroke-width="2.8" stroke-linejoin="round" paint-order="stroke" text-anchor="middle">68</text>
<text x="183.5" y="196.3" font-size="7.9" font-weight="bold" fill="#3a3a3a" stroke="#fff" stroke-width="2.8" stroke-linejoin="round" paint-order="stroke" text-anchor="middle">72</text>
<text x="181.8" y="210.2" font-size="7.9" font-weight="bold" fill="#3a3a3a" stroke="#fff" stroke-width="2.8" stroke-linejoin="round" paint-order="stroke" text-anchor="middle">60</text>
<text x="203.7" y="188.2" font-size="7.9" font-weight="bold" fill="#3a3a3a" stroke="#fff" stroke-width="2.8" stroke-linejoin="round" paint-order="stroke" text-anchor="middle">57</text>
<text x="212.6" y="187.0" font-size="7.9" font-weight="bold" fill="#3a3a3a" stroke="#fff" stroke-width="2.8" stroke-linejoin="round" paint-order="stroke" text-anchor="middle">61</text>
<text x="182.7" y="229.3" font-size="7.9" font-weight="bold" fill="#3a3a3a" stroke="#fff" stroke-width="2.8" stroke-linejoin="round" paint-order="stroke" text-anchor="middle">55</text>
<text x="191.6" y="231.8" font-size="7.9" font-weight="bold" fill="#3a3a3a" stroke="#fff" stroke-width="2.8" stroke-linejoin="round" paint-order="stroke" text-anchor="middle">153</text>
<text x="198.9" y="232.0" font-size="7.9" font-weight="bold" fill="#3a3a3a" stroke="#fff" stroke-width="2.8" stroke-linejoin="round" paint-order="stroke" text-anchor="middle">101</text>
<text x="202.9" y="242.1" font-size="7.9" font-weight="bold" fill="#3a3a3a" stroke="#fff" stroke-width="2.8" stroke-linejoin="round" paint-order="stroke" text-anchor="middle">199</text>
<text x="213.9" y="254.8" font-size="7.9" font-weight="bold" fill="#3a3a3a" stroke="#fff" stroke-width="2.8" stroke-linejoin="round" paint-order="stroke" text-anchor="middle">185</text>
<text x="175.4" y="271.0" font-size="7.9" font-weight="bold" fill="#3a3a3a" stroke="#fff" stroke-width="2.8" stroke-linejoin="round" paint-order="stroke" text-anchor="middle">156</text>
<text x="197.7" y="295.2" font-size="7.9" font-weight="bold" fill="#3a3a3a" stroke="#fff" stroke-width="2.8" stroke-linejoin="round" paint-order="stroke" text-anchor="middle">137</text>
<text x="219" y="301.2" font-size="7.9" font-weight="bold" fill="#3a3a3a" stroke="#fff" stroke-width="2.8" stroke-linejoin="round" paint-order="stroke" text-anchor="middle">141</text>
<text x="244.9" y="258.9" font-size="7.9" font-weight="bold" fill="#3a3a3a" stroke="#fff" stroke-width="2.8" stroke-linejoin="round" paint-order="stroke" text-anchor="middle">157</text>
<text x="256.7" y="280.7" font-size="7.9" font-weight="bold" fill="#3a3a3a" stroke="#fff" stroke-width="2.8" stroke-linejoin="round" paint-order="stroke" text-anchor="middle">186</text>
<text x="264.7" y="275.0" font-size="7.9" font-weight="bold" fill="#3a3a3a" stroke="#fff" stroke-width="2.8" stroke-linejoin="round" paint-order="stroke" text-anchor="middle">177</text>
<text x="285.7" y="304.1" font-size="7.9" font-weight="bold" fill="#3a3a3a" stroke="#fff" stroke-width="2.8" stroke-linejoin="round" paint-order="stroke" text-anchor="middle">130</text>
<text x="310.5" y="299.2" font-size="7.9" font-weight="bold" fill="#3a3a3a" stroke="#fff" stroke-width="2.8" stroke-linejoin="round" paint-order="stroke" text-anchor="middle">88</text>
<text x="323" y="287.0" font-size="7.9" font-weight="bold" fill="#3a3a3a" stroke="#fff" stroke-width="2.8" stroke-linejoin="round" paint-order="stroke" text-anchor="middle">111</text>
<text x="351" y="278.9" font-size="7.9" font-weight="bold" fill="#3a3a3a" stroke="#fff" stroke-width="2.8" stroke-linejoin="round" paint-order="stroke" text-anchor="middle">114</text>
<text x="382.3" y="244.0" font-size="7.9" font-weight="bold" fill="#3a3a3a" stroke="#fff" stroke-width="2.8" stroke-linejoin="round" paint-order="stroke" text-anchor="middle">153</text>
<text x="363" y="203.4" font-size="7.9" font-weight="bold" fill="#3a3a3a" stroke="#fff" stroke-width="2.8" stroke-linejoin="round" paint-order="stroke" text-anchor="middle">207</text>
<text x="390.4" y="193.9" font-size="7.9" font-weight="bold" fill="#3a3a3a" stroke="#fff" stroke-width="2.8" stroke-linejoin="round" paint-order="stroke" text-anchor="middle">N/A</text>
<text x="326.9" y="161.6" font-size="7.9" font-weight="bold" fill="#3a3a3a" stroke="#fff" stroke-width="2.8" stroke-linejoin="round" paint-order="stroke" text-anchor="middle">164</text>
</svg>
<div class="abs" style="left:157px;top:41px;width:107px;height:89px;background:#fff;border-radius:6px;box-shadow:0 2px 8px rgba(0,0,0,.35);"></div>
<div class="abs" style="left:184px;top:125px;width:11px;height:11px;background:#fff;transform:rotate(45deg);box-shadow:2px 2px 4px rgba(0,0,0,.2);"></div>
<div class="abs" style="left:157px;top:110px;width:107px;height:20px;background:#fff;border-radius:0 0 6px 6px;"></div>
<div class="abs" style="left:157px;top:50.5px;width:107px;text-align:center;font-size:9.2px;line-height:10.1px;color:#222;">Bishkek<br>2021-03-14 9:00 AM<br>(LT)</div>
<div class="abs" style="left:167px;top:81px;width:87px;height:39px;background:#004a80;"></div>
<div class="abs" style="left:168px;top:100px;width:54px;height:19px;background:#fff;"></div>
<div class="abs" style="left:223px;top:100px;width:30px;height:19px;background:#ffff00;"></div>
<div class="abs" style="left:168px;top:83.6px;width:54px;text-align:center;font-size:9.4px;font-weight:bold;color:#fff;">Pollutant</div>
<div class="abs" style="left:223px;top:83.6px;width:30px;text-align:center;font-size:9.4px;font-weight:bold;color:#fff;">AQI</div>
<div class="abs" style="left:168px;top:104.5px;width:54px;text-align:center;font-size:9.2px;color:#444;">PM2.5</div>
<div class="abs" style="left:223px;top:104.5px;width:30px;text-align:center;font-size:9.2px;color:#222;">57</div>
</div>

<div class="abs sh" style="top:1px"><span>Select a City</span></div>
<div class="abs sb" style="top:25.5px"><span>Bishkek</span><i>×</i><b></b></div>
<div class="abs sh" style="top:64px"><span>Select a Parameter</span></div>
<div class="abs sb" style="top:88.5px"><span>PM2.5</span><i>×</i><b></b></div>
<div class="abs" style="left:503px;top:126px;width:222px;height:47px;background:#fff;border:1px solid #ccc;"><span style="position:absolute;left:7px;top:7px;font-size:9.3px;font-weight:bold;color:#333;">Bishkek</span>
<svg style="position:absolute;left:192px;top:17px" width="23" height="23" viewBox="0 0 23 23"><rect width="23" height="23" fill="#f4b134"/><circle cx="5.6" cy="17.4" r="2.4" fill="#fff"/><path d="M3.2 10.2a9.6 9.6 0 0 1 9.6 9.6" fill="none" stroke="#fff" stroke-width="3"/><path d="M3.2 4.6a15.2 15.2 0 0 1 15.2 15.2" fill="none" stroke="#fff" stroke-width="3"/></svg>
</div>
<div class="abs note">Note: Values above 500 are considered Beyond the AQI. Follow<br>recommendations for the Hazardous category. Additional information<br>on reducing exposure to extremely high levels of particle pollution is<br>available <b style="text-decoration:underline;color:#222">here</b>.</div>

<div class="abs tab" style="left:14px;width:70px;background:#fff;border:1px solid #999;border-top:2px solid #004a80;border-bottom:none;color:#333;height:19px;line-height:21px;">AQI</div>
<div class="abs tab" style="left:88px;width:111px;">Concentration</div>
<div class="abs tab" style="left:201px;width:92px;">Historical</div>
<div class="abs" style="left:14px;top:333px;width:713px;height:1px;background:#a8a8a8;"></div>
<div class="abs" style="left:14px;top:342px;font-size:9.33px;color:#222;white-space:nowrap;">Learn more about how the Air Quality Index [AQI] is calculated from the EPA <b style="text-decoration:underline">here</b>.</div>

<div id="chart" class="abs" style="left:14px;top:367px;width:534px;height:256px;background:#fff;">
<svg class="abs" style="left:0;top:0" width="534" height="256" viewBox="0 0 534 256" font-family="Liberation Sans, sans-serif">
<rect x="50.5" y="40.25" width="476.5" height="1" fill="#e6e6e6"/>
<rect x="50.5" y="64.50" width="476.5" height="1" fill="#e6e6e6"/>
<rect x="50.5" y="88.75" width="476.5" height="1" fill="#e6e6e6"/>
<rect x="50.5" y="113.00" width="476.5" height="1" fill="#e6e6e6"/>
<rect x="50.5" y="137.25" width="476.5" height="1" fill="#e6e6e6"/>
<text x="40.2" y="43.0" font-size="7.9" font-weight="bold" fill="#222" text-anchor="end" letter-spacing="0.05">500</text>
<text x="40.2" y="67.2" font-size="7.9" font-weight="bold" fill="#222" text-anchor="end" letter-spacing="0.05">400</text>
<text x="40.2" y="91.5" font-size="7.9" font-weight="bold" fill="#222" text-anchor="end" letter-spacing="0.05">300</text>
<text x="40.2" y="115.7" font-size="7.9" font-weight="bold" fill="#222" text-anchor="end" letter-spacing="0.05">200</text>
<text x="40.2" y="139.9" font-size="7.9" font-weight="bold" fill="#222" text-anchor="end" letter-spacing="0.05">100</text>
<text x="40.2" y="164.2" font-size="7.9" font-weight="bold" fill="#222" text-anchor="end" letter-spacing="0.05">0</text>
<rect x="50.5" y="161.5" width="476.5" height="1" fill="#c8d4e6"/>
<rect x="50.00" y="162.0" width="1" height="6" fill="#c8d4e6"/>
<rect x="69.85" y="162.0" width="1" height="6" fill="#c8d4e6"/>
<rect x="89.71" y="162.0" width="1" height="6" fill="#c8d4e6"/>
<rect x="109.56" y="162.0" width="1" height="6" fill="#c8d4e6"/>
<rect x="129.42" y="162.0" width="1" height="6" fill="#c8d4e6"/>
<rect x="149.27" y="162.0" width="1" height="6" fill="#c8d4e6"/>
<rect x="169.12" y="162.0" width="1" height="6" fill="#c8d4e6"/>
<rect x="188.98" y="162.0" width="1" height="6" fill="#c8d4e6"/>
<rect x="208.83" y="162.0" width="1" height="6" fill="#c8d4e6"/>
<rect x="228.69" y="162.0" width="1" height="6" fill="#c8d4e6"/>
<rect x="248.54" y="162.0" width="1" height="6" fill="#c8d4e6"/>
<rect x="268.40" y="162.0" width="1" height="6" fill="#c8d4e6"/>
<rect x="288.25" y="162.0" width="1" height="6" fill="#c8d4e6"/>
<rect x="308.10" y="162.0" width="1" height="6" fill="#c8d4e6"/>
<rect x="327.96" y="162.0" width="1" height="6" fill="#c8d4e6"/>
<rect x="347.81" y="162.0" width="1" height="6" fill="#c8d4e6"/>
<rect x="367.67" y="162.0" width="1" height="6" fill="#c8d4e6"/>
<rect x="387.52" y="162.0" width="1" height="6" fill="#c8d4e6"/>
<rect x="407.38" y="162.0" width="1" height="6" fill="#c8d4e6"/>
<rect x="427.23" y="162.0" width="1" height="6" fill="#c8d4e6"/>
<rect x="447.08" y="162.0" width="1" height="6" fill="#c8d4e6"/>
<rect x="466.94" y="162.0" width="1" height="6" fill="#c8d4e6"/>
<rect x="486.79" y="162.0" width="1" height="6" fill="#c8d4e6"/>
<rect x="506.65" y="162.0" width="1" height="6" fill="#c8d4e6"/>
<rect x="526.50" y="162.0" width="1" height="6" fill="#c8d4e6"/>
<rect x="55.23" y="150.36" width="10.4" height="11.64" fill="#00e400" stroke="#4d4d33" stroke-width="1"/>
<rect x="75.08" y="149.39" width="10.4" height="12.61" fill="#ffff00" stroke="#4d4d33" stroke-width="1"/>
<rect x="94.94" y="151.33" width="10.4" height="10.67" fill="#00e400" stroke="#4d4d33" stroke-width="1"/>
<rect x="114.79" y="152.30" width="10.4" height="9.70" fill="#00e400" stroke="#4d4d33" stroke-width="1"/>
<rect x="134.64" y="148.42" width="10.4" height="13.58" fill="#ffff00" stroke="#4d4d33" stroke-width="1"/>
<rect x="154.50" y="150.84" width="10.4" height="11.15" fill="#00e400" stroke="#4d4d33" stroke-width="1"/>
<rect x="174.35" y="148.42" width="10.4" height="13.58" fill="#ffff00" stroke="#4d4d33" stroke-width="1"/>
<rect x="194.21" y="148.42" width="10.4" height="13.58" fill="#ffff00" stroke="#4d4d33" stroke-width="1"/>
<rect x="214.06" y="144.54" width="10.4" height="17.46" fill="#ffff00" stroke="#4d4d33" stroke-width="1"/>
<rect x="233.91" y="140.42" width="10.4" height="21.58" fill="#ffff00" stroke="#4d4d33" stroke-width="1"/>
<rect x="253.77" y="135.08" width="10.4" height="26.92" fill="#ff7e00" stroke="#4d4d33" stroke-width="1"/>
<rect x="273.62" y="133.14" width="10.4" height="28.86" fill="#ff7e00" stroke="#4d4d33" stroke-width="1"/>
<rect x="293.48" y="132.41" width="10.4" height="29.59" fill="#ff7e00" stroke="#4d4d33" stroke-width="1"/>
<rect x="313.33" y="134.11" width="10.4" height="27.89" fill="#ff7e00" stroke="#4d4d33" stroke-width="1"/>
<rect x="333.19" y="141.39" width="10.4" height="20.61" fill="#ffff00" stroke="#4d4d33" stroke-width="1"/>
<rect x="353.04" y="144.54" width="10.4" height="17.46" fill="#ffff00" stroke="#4d4d33" stroke-width="1"/>
<rect x="372.89" y="142.60" width="10.4" height="19.40" fill="#ffff00" stroke="#4d4d33" stroke-width="1"/>
<rect x="392.75" y="140.42" width="10.4" height="21.58" fill="#ffff00" stroke="#4d4d33" stroke-width="1"/>
<rect x="412.60" y="138.48" width="10.4" height="23.52" fill="#ffff00" stroke="#4d4d33" stroke-width="1"/>
<rect x="432.46" y="134.60" width="10.4" height="27.40" fill="#ff7e00" stroke="#4d4d33" stroke-width="1"/>
<rect x="452.31" y="137.99" width="10.4" height="24.01" fill="#ffff00" stroke="#4d4d33" stroke-width="1"/>
<rect x="472.16" y="142.60" width="10.4" height="19.40" fill="#ffff00" stroke="#4d4d33" stroke-width="1"/>
<rect x="492.02" y="148.18" width="10.4" height="13.82" fill="#ffff00" stroke="#4d4d33" stroke-width="1"/>
<rect x="511.87" y="148.18" width="10.4" height="13.82" fill="#ffff00" stroke="#4d4d33" stroke-width="1"/>
<text transform="translate(63.4,174.0) rotate(-45)" font-size="8.1" fill="#6a6a6a" text-anchor="end">10 AM</text>
<text transform="translate(83.3,174.0) rotate(-45)" font-size="8.1" fill="#6a6a6a" text-anchor="end">11 AM</text>
<text transform="translate(103.1,174.0) rotate(-45)" font-size="8.1" fill="#6a6a6a" text-anchor="end">12 PM</text>
<text transform="translate(123.0,174.0) rotate(-45)" font-size="8.1" fill="#6a6a6a" text-anchor="end">1 PM</text>
<text transform="translate(142.8,174.0) rotate(-45)" font-size="8.1" fill="#6a6a6a" text-anchor="end">2 PM</text>
<text transform="translate(162.7,174.0) rotate(-45)" font-size="8.1" fill="#6a6a6a" text-anchor="end">3 PM</text>
<text transform="translate(182.6,174.0) rotate(-45)" font-size="8.1" fill="#6a6a6a" text-anchor="end">4 PM</text>
<text transform="translate(202.4,174.0) rotate(-45)" font-size="8.1" fill="#6a6a6a" text-anchor="end">5 PM</text>
<text transform="translate(222.3,174.0) rotate(-45)" font-size="8.1" fill="#6a6a6a" text-anchor="end">6 PM</text>
<text transform="translate(242.1,174.0) rotate(-45)" font-size="8.1" fill="#6a6a6a" text-anchor="end">7 PM</text>
<text transform="translate(262.0,174.0) rotate(-45)" font-size="8.1" fill="#6a6a6a" text-anchor="end">8 PM</text>
<text transform="translate(281.8,174.0) rotate(-45)" font-size="8.1" fill="#6a6a6a" text-anchor="end">9 PM</text>
<text transform="translate(301.7,174.0) rotate(-45)" font-size="8.1" fill="#6a6a6a" text-anchor="end">10 PM</text>
<text transform="translate(321.5,174.0) rotate(-45)" font-size="8.1" fill="#6a6a6a" text-anchor="end">11 PM</text>
<text transform="translate(341.4,174.0) rotate(-45)" font-size="8.1" fill="#6a6a6a" text-anchor="end">Mar 14, 2021 12 AM</text>
<text transform="translate(361.2,174.0) rotate(-45)" font-size="8.1" fill="#6a6a6a" text-anchor="end">1 AM</text>
<text transform="translate(381.1,174.0) rotate(-45)" font-size="8.1" fill="#6a6a6a" text-anchor="end">2 AM</text>
<text transform="translate(400.9,174.0) rotate(-45)" font-size="8.1" fill="#6a6a6a" text-anchor="end">3 AM</text>
<text transform="translate(420.8,174.0) rotate(-45)" font-size="8.1" fill="#6a6a6a" text-anchor="end">4 AM</text>
<text transform="translate(440.7,174.0) rotate(-45)" font-size="8.1" fill="#6a6a6a" text-anchor="end">5 AM</text>
<text transform="translate(460.5,174.0) rotate(-45)" font-size="8.1" fill="#6a6a6a" text-anchor="end">6 AM</text>
<text transform="translate(480.4,174.0) rotate(-45)" font-size="8.1" fill="#6a6a6a" text-anchor="end">7 AM</text>
<text transform="translate(500.2,174.0) rotate(-45)" font-size="8.1" fill="#6a6a6a" text-anchor="end">8 AM</text>
<text transform="translate(520.1,174.0) rotate(-45)" font-size="8.1" fill="#6a6a6a" text-anchor="end">9 AM</text>
<text transform="translate(19.6,98.30000000000001) rotate(-90)" font-size="7.4" fill="#222" text-anchor="middle">AQI</text>
<text x="267" y="16" font-size="12" fill="#333" text-anchor="middle" letter-spacing="0.45">Bishkek – PM2.5</text>
<rect x="252" y="240" width="10" height="7.5" fill="#ccc"/>
<text x="266" y="247" font-size="8.2" font-weight="bold" fill="#222">AQI</text>
</svg>
</div>
<div id="cc" class="abs">
<div class="h"><div style="top:4px;font-size:10px;">Current Conditions</div><div style="top:19.6px;font-size:8px;">observed at</div><div style="top:32px;font-size:10px;">Mar 14, 2021 9:00 AM (LT)</div></div>
<div class="y"><div style="margin-top:10px">57 AQI</div><div>Moderate</div><div>PM2.5</div></div>
<div style="position:absolute;left:0;top:132.7px;width:166px;text-align:center;font-size:8px;font-weight:bold;color:#222;">Health Message</div>
<div class="m">The AQI is between 51 and 100. Air quality is<br>acceptable; however, pollution in this range<br>may pose a moderate health concern for a<br>very small number of individuals. People<br>who are unusually sensitive to ozone or<br>particle pollution may experience respiratory<br>symptoms.</div>
</div>
</body>
</html>
